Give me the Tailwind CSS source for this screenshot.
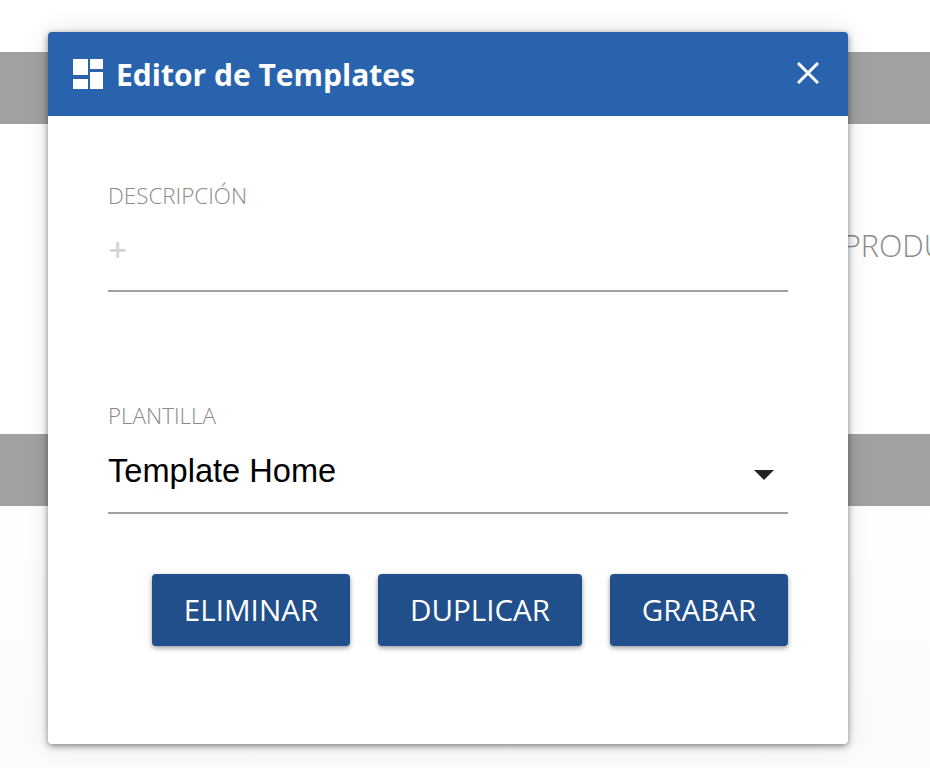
<!DOCTYPE html>
<html lang="en">
    <head>
        <meta charset="UTF-8" />
        <meta name="viewport" content="width=device-width, initial-scale=1.0" />
        <title>Editor de Templates</title>
        <script src="https://cdn.jsdelivr.net/npm/@tailwindcss/browser@4"></script>
    </head>
    <body class="relative h-[768px] overflow-hidden bg-white font-['Open_Sans',sans-serif]">
        <!-- Page behind the dialog -->
        <div class="flex h-full flex-col bg-gradient-to-b from-white from-60% to-[#fbfbfd]">
            <div class="mt-[52px] h-[72px] shrink-0 bg-[#a1a1a1]"></div>
            <div class="h-[310px] shrink-0 bg-white pt-[103px] pl-[843px]">
                <span class="block text-[30.5px] leading-9 font-light whitespace-nowrap text-[#8c8c8c]">PRODU</span>
            </div>
            <div class="h-[72px] shrink-0 bg-[#a1a1a1]"></div>
        </div>

        <!-- Dialog -->
        <div class="absolute top-8 left-12 flex h-[712px] w-[800px] flex-col rounded bg-white shadow-[0_2px_6px_rgba(0,0,0,0.45),0_0_24px_rgba(0,0,0,0.12)]">
            <header class="flex h-[84px] shrink-0 items-center rounded-t bg-[#2a63ad] pr-[29px] pl-[25px] text-white">
                <svg class="h-[30px] w-[30px] shrink-0" viewBox="0 0 30 30" fill="currentColor">
                    <rect x="0" y="0" width="15" height="16" />
                    <rect x="17" y="0" width="13" height="10" />
                    <rect x="17" y="13" width="13" height="17" />
                    <rect x="0" y="20" width="15" height="10" />
                </svg>
                <h1 class="ml-[13px] flex-1 text-[30px] font-bold">Editor de Templates</h1>
                <svg class="-mt-[2px] h-[22px] w-[22px]" viewBox="0 0 22 22" fill="none" stroke="currentColor" stroke-width="3">
                    <path d="M1 1 21 21M21 1 1 21" />
                </svg>
            </header>

            <div class="flex flex-1 flex-col px-[60px]">
                <label class="mt-[64px] text-[22.4px] leading-[32px] font-light text-[#8a8a8a]">DESCRIPCIÓN</label>
                <div class="mt-[9px] flex h-[71px] items-center border-b-2 border-[#a1a1a1] pb-[11px] text-[32px] font-semibold text-[#d4d4d4] italic">+</div>

                <label class="mt-[108px] text-[22.4px] leading-[32px] font-light text-[#8a8a8a]">PLANTILLA</label>
                <div class="mt-[3px] flex h-[79px] items-center justify-between border-b-2 border-[#a1a1a1] pr-[14px] pb-[5px] font-['Liberation_Sans',sans-serif] text-[32.6px] text-black">
                    <span>Template Home</span>
                    <span class="mt-[7px] h-0 w-0 border-x-[10px] border-t-[10px] border-x-transparent border-t-[#222]"></span>
                </div>

                <div class="mt-[60px] flex justify-end gap-7">
                    <button class="h-[72px] w-[198px] rounded bg-[#214f8c] text-[29.6px] text-white shadow-[0_2px_5px_rgba(0,0,0,0.4)]">ELIMINAR</button>
                    <button class="h-[72px] w-[204px] rounded bg-[#214f8c] text-[29.6px] text-white shadow-[0_2px_5px_rgba(0,0,0,0.4)]">DUPLICAR</button>
                    <button class="h-[72px] w-[178px] rounded bg-[#214f8c] text-[29.6px] text-white shadow-[0_2px_5px_rgba(0,0,0,0.4)]">GRABAR</button>
                </div>
            </div>
        </div>
    </body>
</html>
